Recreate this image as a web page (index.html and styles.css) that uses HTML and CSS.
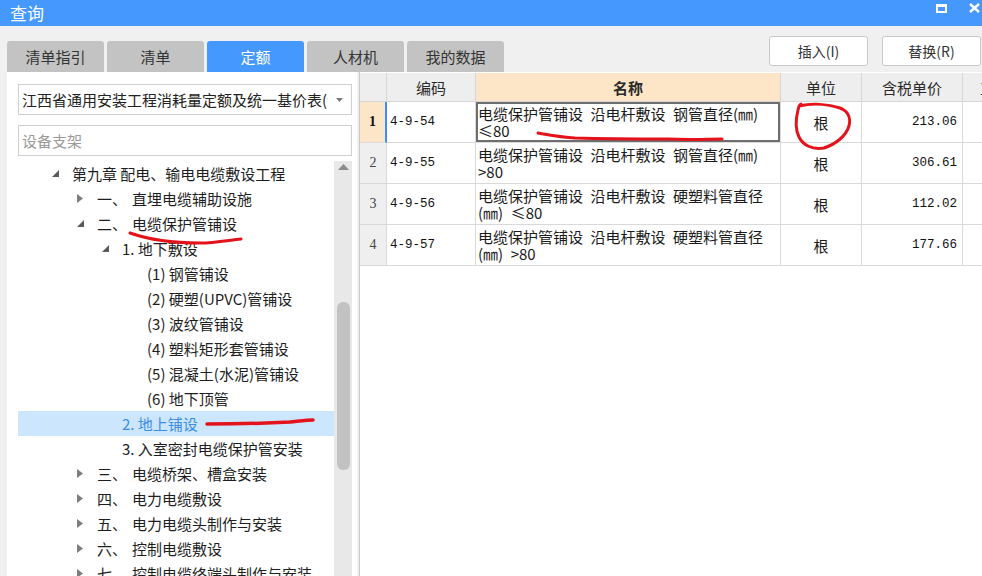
FILE: index.html
```html
<!DOCTYPE html>
<html lang="zh-CN">
<head>
<meta charset="utf-8">
<title>查询</title>
<link rel="stylesheet" href="styles.css">
</head>
<body>
<div class="titlebar">
  <span class="title">查询</span>
  <div class="win-icons">
    <span class="max-icon"></span>
    <svg class="close-icon" width="11" height="10" viewBox="0 0 11 10"><path d="M1 1 L10 9 M10 1 L1 9" stroke="#fff" stroke-width="2.4" fill="none"/></svg>
  </div>
</div>

<div class="toolbar">
  <div class="tabs">
    <div class="tab">清单指引</div>
    <div class="tab">清单</div>
    <div class="tab active">定额</div>
    <div class="tab">人材机</div>
    <div class="tab">我的数据</div>
  </div>
  <div class="buttons">
    <button class="btn">插入(I)</button>
    <button class="btn">替换(R)</button>
  </div>
</div>

<div class="main">
  <div class="left">
    <div class="select">
      <span class="select-text">江西省通用安装工程消耗量定额及统一基价表(江西省2017)</span>
      <svg class="select-arrow" width="7" height="4" viewBox="0 0 7 4"><path d="M0 0 H7 L3.5 4 Z" fill="#7a7a7a"/></svg>
    </div>
    <div class="search">设备支架</div>
    <div class="tree-wrap">
      <div class="tree">
        <div class="node l1"><span class="arr"><svg width="7" height="7" viewBox="0 0 7 7"><path d="M7 0 V7 H0 Z" fill="#5a5a5a"/></svg></span>第九章 配电、输电电缆敷设工程</div>
        <div class="node l2"><span class="arr"><svg width="6" height="9" viewBox="0 0 6 9"><path d="M0 0 L6 4.5 L0 9 Z" fill="#7d7d7d"/></svg></span><span class="num">一、</span>直埋电缆辅助设施</div>
        <div class="node l2"><span class="arr"><svg width="7" height="7" viewBox="0 0 7 7"><path d="M7 0 V7 H0 Z" fill="#5a5a5a"/></svg></span><span class="num">二、</span>电缆保护管铺设</div>
        <div class="node l3"><span class="arr"><svg width="7" height="7" viewBox="0 0 7 7"><path d="M7 0 V7 H0 Z" fill="#5a5a5a"/></svg></span>1. 地下敷设</div>
        <div class="node l4"><span class="arr"></span>(1) 钢管铺设</div>
        <div class="node l4"><span class="arr"></span>(2) 硬塑(UPVC)管铺设</div>
        <div class="node l4"><span class="arr"></span>(3) 波纹管铺设</div>
        <div class="node l4"><span class="arr"></span>(4) 塑料矩形套管铺设</div>
        <div class="node l4"><span class="arr"></span>(5) 混凝土(水泥)管铺设</div>
        <div class="node l4"><span class="arr"></span>(6) 地下顶管</div>
        <div class="node l3 selected"><span class="arr"></span>2. 地上铺设</div>
        <div class="node l3"><span class="arr"></span>3. 入室密封电缆保护管安装</div>
        <div class="node l2"><span class="arr"><svg width="6" height="9" viewBox="0 0 6 9"><path d="M0 0 L6 4.5 L0 9 Z" fill="#7d7d7d"/></svg></span><span class="num">三、</span>电缆桥架、槽盒安装</div>
        <div class="node l2"><span class="arr"><svg width="6" height="9" viewBox="0 0 6 9"><path d="M0 0 L6 4.5 L0 9 Z" fill="#7d7d7d"/></svg></span><span class="num">四、</span>电力电缆敷设</div>
        <div class="node l2"><span class="arr"><svg width="6" height="9" viewBox="0 0 6 9"><path d="M0 0 L6 4.5 L0 9 Z" fill="#7d7d7d"/></svg></span><span class="num">五、</span>电力电缆头制作与安装</div>
        <div class="node l2"><span class="arr"><svg width="6" height="9" viewBox="0 0 6 9"><path d="M0 0 L6 4.5 L0 9 Z" fill="#7d7d7d"/></svg></span><span class="num">六、</span>控制电缆敷设</div>
        <div class="node l2"><span class="arr"><svg width="6" height="9" viewBox="0 0 6 9"><path d="M0 0 L6 4.5 L0 9 Z" fill="#7d7d7d"/></svg></span><span class="num">七、</span>控制电缆终端头制作与安装</div>
      </div>
      <div class="scrollbar">
        <svg class="sb-up" width="11" height="6" viewBox="0 0 11 6"><path d="M0 6 L5.5 0 L11 6 Z" fill="#8c8c8c"/></svg>
        <div class="sb-thumb"></div>
      </div>
    </div>
  </div>

  <div class="right">
    <div class="grid">
      <div class="hc"></div>
      <div class="hc">编码</div>
      <div class="hc name-h">名称</div>
      <div class="hc">单位</div>
      <div class="hc">含税单价</div>
      <div class="hc">工程量</div>

      <div class="c rn rn-sel">1</div>
      <div class="c code code-sel">4-9-54</div>
      <div class="c name name-sel"><span class="l1">电缆保护管铺设&ensp;沿电杆敷设&ensp;钢管直径(㎜)</span><span>≤80</span></div>
      <div class="c unit">根</div>
      <div class="c price">213.06</div>
      <div class="c"></div>

      <div class="c rn">2</div>
      <div class="c code">4-9-55</div>
      <div class="c name"><span class="l1">电缆保护管铺设&ensp;沿电杆敷设&ensp;钢管直径(㎜)</span><span>&gt;80</span></div>
      <div class="c unit">根</div>
      <div class="c price">306.61</div>
      <div class="c"></div>

      <div class="c rn">3</div>
      <div class="c code">4-9-56</div>
      <div class="c name"><span class="l1">电缆保护管铺设&ensp;沿电杆敷设&ensp;硬塑料管直径</span><span>(㎜)&ensp;≤80</span></div>
      <div class="c unit">根</div>
      <div class="c price">112.02</div>
      <div class="c"></div>

      <div class="c rn">4</div>
      <div class="c code">4-9-57</div>
      <div class="c name"><span class="l1">电缆保护管铺设&ensp;沿电杆敷设&ensp;硬塑料管直径</span><span>(㎜)&ensp;&gt;80</span></div>
      <div class="c unit">根</div>
      <div class="c price">177.66</div>
      <div class="c"></div>
    </div>
  </div>
</div>

<svg class="marks" width="982" height="576" viewBox="0 0 982 576">
  <path d="M130 233 C150 240 175 243 200 243 C215 243 230 240 241 239" stroke="#e4131b" stroke-width="3" fill="none" stroke-linecap="round"/>
  <path d="M207 424 C240 424 270 423 290 422 C300 421 308 420 313 420" stroke="#e4131b" stroke-width="3.5" fill="none" stroke-linecap="round"/>
  <path d="M538 133 C550 135 560 137 575 138 C610 139 640 139 668 139 C690 140 710 139 722 139" stroke="#e4131b" stroke-width="3" fill="none" stroke-linecap="round"/>
  <path d="M799 106 C812 103 828 104 840 108 C848 111 851 118 849 126 C846 136 836 144 824 148 C812 150 803 145 799 137 C795 129 796 118 798 110 C799 106 800 104 801 104" stroke="#e4131b" stroke-width="3" fill="none" stroke-linecap="round"/>
</svg>
</body>
</html>
```

FILE: styles.css
```css
* { box-sizing: border-box; }

html, body {
  margin: 0;
  padding: 0;
}

body {
  width: 982px;
  height: 576px;
  overflow: hidden;
  position: relative;
  background: #f0f0f0;
  font-family: "Noto Sans CJK SC", "Noto Sans", sans-serif;
  color: #1e1e1e;
}

.titlebar {
  height: 26px;
  background: #4598fe;
  display: flex;
  align-items: center;
  justify-content: space-between;
  padding: 0 2px 0 10px;
}

.title {
  color: #fff;
  font-size: 17px;
  line-height: 26px;
}

.win-icons {
  display: flex;
  align-items: center;
  gap: 22px;
  height: 26px;
  padding-bottom: 10px;
}

.max-icon {
  width: 11px;
  height: 9px;
  border: 2px solid #fff;
  border-top-width: 3px;
}

.close-icon {
  display: block;
}

.toolbar {
  height: 46px;
  display: flex;
  padding-left: 7px;
}

.tabs {
  display: flex;
  align-items: flex-end;
  gap: 3px;
}

.tab {
  width: 97px;
  height: 31px;
  background: #c3c3c3;
  border-radius: 3px 3px 0 0;
  font-size: 15px;
  color: #333;
  display: flex;
  align-items: center;
  justify-content: center;
}

.tab.active {
  background: #4598fe;
  color: #fff;
}

.buttons {
  margin-left: auto;
  margin-top: 10px;
  margin-right: 1px;
  display: flex;
  gap: 14px;
  align-self: flex-start;
}

.btn {
  width: 99px;
  height: 30px;
  background: #fff;
  border: 1px solid #c9c9c9;
  border-radius: 3px;
  font-family: "Noto Sans CJK SC", "Noto Sans", sans-serif;
  font-size: 14px;
  color: #333;
  padding: 0;
}

.main {
  display: flex;
  height: 504px;
  padding-left: 7px;
  gap: 2px;
}

.left {
  width: 350px;
  background: #fff;
  padding: 12px 5px 0 11px;
  display: flex;
  flex-direction: column;
}

.select {
  height: 31px;
  border: 1px solid #cfcfcf;
  display: flex;
  align-items: center;
  padding: 0 8px 0 3px;
  gap: 8px;
  font-size: 15px;
}

.select-text {
  flex: 1;
  white-space: nowrap;
  overflow: hidden;
  color: #222;
}

.select-arrow {
  flex: none;
}

.search {
  height: 31px;
  margin-top: 10px;
  border: 1px solid #cfcfcf;
  padding-left: 3px;
  font-size: 15px;
  line-height: 29px;
  color: #9a9a9a;
}

.tree-wrap {
  margin-top: 5px;
  flex: 1;
  display: flex;
  overflow: hidden;
}

.tree {
  width: 316px;
}

.node {
  height: 25px;
  display: flex;
  align-items: center;
  font-size: 15px;
  white-space: nowrap;
  color: #1e1e1e;
}

.node.l1 { padding-left: 34px; }
.node.l2 { padding-left: 59px; }
.node.l3 { padding-left: 84px; }
.node.l4 { padding-left: 109px; }

.node.selected {
  background: #cce6fd;
  color: #3d8de6;
}

.arr {
  width: 20px;
  flex: none;
  display: flex;
  align-items: center;
}

.arr svg { display: block; }

.num {
  display: inline-block;
  width: 35px;
}

.scrollbar {
  width: 18px;
  background: #e8e8e8;
  display: flex;
  flex-direction: column;
  align-items: center;
}

.sb-up {
  margin-top: 3px;
  display: block;
}

.sb-thumb {
  width: 13px;
  height: 168px;
  margin-top: 132px;
  background: #c2c2c2;
  border-radius: 6px;
}

.right {
  flex: 1;
  background: #fff;
  border-left: 1px solid #c9c9c9;
  overflow: hidden;
  padding-top: 1px;
}

.grid {
  width: 683px;
  display: grid;
  grid-template-columns: 27px 89px 305px 81px 101px 80px;
  grid-template-rows: 29px repeat(4, 41px);
}

.hc {
  background: #eeeeee;
  border-right: 1px solid #d6d6d6;
  border-bottom: 1px solid #d6d6d6;
  font-size: 15px;
  color: #2a2a2a;
  display: flex;
  align-items: center;
  justify-content: center;
  white-space: nowrap;
  overflow: hidden;
}

.hc.name-h {
  background: #fde5c8;
  font-weight: bold;
}

.c {
  border-right: 1px solid #d9d9d9;
  border-bottom: 1px solid #d9d9d9;
  display: flex;
  align-items: center;
  overflow: hidden;
}

.rn {
  background: #efefef;
  justify-content: center;
  font-family: "Liberation Serif", serif;
  font-size: 14px;
  color: #444;
}

.rn.rn-sel {
  background: #fde5c8;
  font-weight: bold;
  color: #111;
  border-right: 2px solid #3c8eff;
}

.code {
  padding-left: 3px;
  font-family: "Liberation Mono", monospace;
  font-size: 12.5px;
  color: #111;
}

.name {
  flex-direction: column;
  align-items: flex-start;
  justify-content: center;
  padding-left: 2px;
  font-size: 15px;
  line-height: 17px;
  color: #1a1a1a;
  white-space: nowrap;
}

.name.name-sel {
  box-shadow: inset 0 0 0 2px #6e6e6e;
}

.unit {
  justify-content: center;
  font-size: 15px;
  color: #1a1a1a;
}

.price {
  justify-content: flex-end;
  padding-right: 5px;
  font-family: "Liberation Mono", monospace;
  font-size: 12.5px;
  color: #111;
}

.marks {
  position: absolute;
  left: 0;
  top: 0;
  pointer-events: none;
}
```
